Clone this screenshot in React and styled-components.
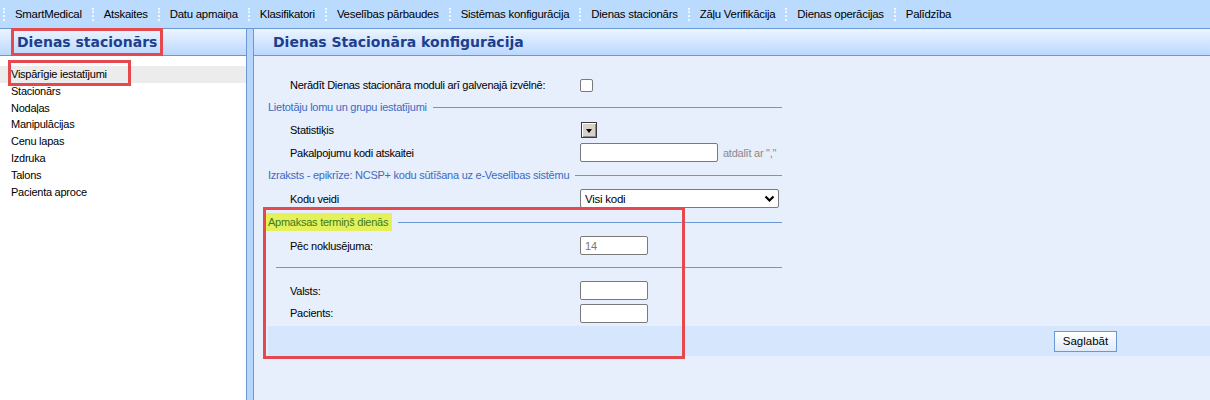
import React from 'react';
import styled, { createGlobalStyle } from 'styled-components';

const GlobalStyle = createGlobalStyle`
  body {
    margin: 0;
    font-family: "Liberation Sans", Arial, sans-serif;
    font-size: 11px;
    letter-spacing: -0.25px;
    color: #000;
    background: #e7eefc;
  }
`;

const Page = styled.div`
  display: flex;
  flex-direction: column;
  height: 400px;
  overflow: hidden;
`;

const MenuBar = styled.div`
  display: flex;
  align-items: center;
  height: 28px;
  background: #bbdbfe;
  border-bottom: 1px solid #6a98d4;
  padding-left: 3px;
`;

const MenuItem = styled.div`
  display: flex;
  align-items: center;
  font-size: 11.42px;
  margin-right: 10px;
`;

const MenuSep = styled.span`
  width: 0;
  height: 13px;
  border-left: 2px dotted #f2f8ff;
  margin-right: 10px;
`;

const Main = styled.div`
  flex: 1;
  display: flex;
  min-height: 0;
`;

const SidePanel = styled.div`
  width: 246px;
  background: #fff;
  display: flex;
  flex-direction: column;
`;

const Splitter = styled.div`
  width: 6px;
  background: #b8d6fc;
  border-left: 1px solid #6a98d4;
  border-right: 1px solid #6a98d4;
`;

const ContentPanel = styled.div`
  flex: 1;
  position: relative;
  background: #e7eefc;
`;

const PanelHeader = styled.div`
  height: 26px;
  display: flex;
  align-items: center;
  padding-left: ${({ $indent }) => $indent}px;
  background: linear-gradient(#ecf4ff, #bcd8fd);
  border-bottom: 1px solid #6a98d4;
`;

const Title = styled.span`
  font-family: "DejaVu Sans", Verdana, sans-serif;
  font-weight: bold;
  font-size: 14px;
  letter-spacing: 0;
  color: #1c3f8e;
`;

const Annotated = styled.span`
  outline: 3px solid #e5484d;
  outline-offset: ${({ $offset }) => $offset || '2px'};
`;

const NavList = styled.ul`
  list-style: none;
  margin: 0;
  padding: 10px 0 0;
`;

const NavItem = styled.li`
  height: 16.8px;
  line-height: 16.8px;
  padding-left: 11px;
  background: ${({ $active }) => ($active ? '#ececec' : 'transparent')};
`;

const NavBox = styled.span`
  position: relative;
  &::after {
    content: '';
    position: absolute;
    left: -3px;
    top: -8px;
    width: 117px;
    height: 20px;
    border: 3px solid #e5484d;
  }
`;

const Form = styled.div`
  margin: 18px 0 0 14px;
  width: 514px;
`;

const Row = styled.div`
  display: flex;
  align-items: center;
  height: ${({ $h }) => $h}px;
`;

const Label = styled.div`
  width: 290px;
  padding-left: 22px;
  flex-shrink: 0;
`;

const Legend = styled.div`
  display: flex;
  align-items: center;
  height: ${({ $h }) => $h}px;
  color: ${({ $green }) => ($green ? '#3d7a1c' : '#3b6cc1')};

  &::after {
    content: '';
    flex: 1;
    height: 1px;
    background: #6a98d4;
    margin-left: 6px;
  }
`;

const LegendText = styled.span`
  padding: ${({ $mark }) => ($mark ? '3px 4px 3px 2px' : '0')};
  margin-left: ${({ $mark }) => ($mark ? '-2px' : '0')};
  background: ${({ $mark }) => ($mark ? '#e4f15a' : 'transparent')};
`;

const Rule = styled.div`
  height: 1px;
  background: #6a98d4;
  margin: 10px 0 11px 8px;
`;

const Checkbox = styled.span`
  width: 11px;
  height: 11px;
  background: #fff;
  border: 1px solid #7a7a7a;
  border-radius: 2px;
`;

const DropButton = styled.span`
  width: 14px;
  height: 14px;
  margin-left: 1px;
  display: flex;
  align-items: center;
  justify-content: center;
  background: #d6d2ca;
  border: 1px solid #3c3c3c;
  box-shadow: inset 1px 1px 0 #fff, inset -1px -1px 0 #8a8a8a;

  &::before {
    content: '';
    border-left: 3px solid transparent;
    border-right: 3px solid transparent;
    border-top: 4px solid #000;
    margin-top: 1px;
  }
`;

const TextInput = styled.input`
  box-sizing: border-box;
  width: ${({ $w }) => $w}px;
  height: 19px;
  border: 1px solid #7a7a7a;
  border-radius: 2px;
  background: #fff;
  padding: 0 4px;
  font: inherit;
  color: #777;
  outline: none;
`;

const Hint = styled.span`
  margin-left: 5px;
  color: #8a8a8a;
`;

const Select = styled.div`
  box-sizing: border-box;
  width: 199px;
  height: 19px;
  display: flex;
  align-items: center;
  justify-content: space-between;
  padding: 0 3px 0 4px;
  background: #fff;
  border: 1px solid #7a7a7a;
  border-radius: 2px;
  font-size: 11.5px;
`;

const Footer = styled.div`
  margin: 2px 0 0 14px;
  height: 30px;
  display: flex;
  align-items: center;
  justify-content: flex-end;
  padding-right: 93px;
  background: #d6e6fc;
`;

const SaveButton = styled.button`
  width: 63px;
  height: 21px;
  border: 1px solid #6a98d4;
  background: linear-gradient(#ffffff, #dfeafa);
  font: inherit;
  font-size: 11.5px;
  color: #000;
  padding: 0;
`;

const FocusBox = styled.div`
  position: absolute;
  left: 9px;
  top: 178px;
  width: 416px;
  height: 146px;
  border: 3px solid #e5484d;
  pointer-events: none;
`;

const menu = [
  'SmartMedical',
  'Atskaites',
  'Datu apmaiņa',
  'Klasifikatori',
  'Veselības pārbaudes',
  'Sistēmas konfigurācija',
  'Dienas stacionārs',
  'Zāļu Verifikācija',
  'Dienas operācijas',
  'Palīdzība',
];

const navItems = [
  'Stacionārs',
  'Nodaļas',
  'Manipulācijas',
  'Cenu lapas',
  'Izdruka',
  'Talons',
  'Pacienta aproce',
];

const Chevron = () => (
  <svg width="11" height="8" viewBox="0 0 11 8">
    <path d="M1.5 1.5 L5.5 5.5 L9.5 1.5" fill="none" stroke="#000" strokeWidth="2.2" />
  </svg>
);

const App = () => (
  <>
    <GlobalStyle />
    <Page>
      <MenuBar>
        {menu.map((item) => (
          <MenuItem key={item}>
            <MenuSep />
            {item}
          </MenuItem>
        ))}
      </MenuBar>
      <Main>
        <SidePanel>
          <PanelHeader $indent={17}>
            <Annotated $offset="3px">
              <Title>Dienas stacionārs</Title>
            </Annotated>
          </PanelHeader>
          <NavList>
            <NavItem $active>
              <NavBox>Vispārīgie iestatījumi</NavBox>
            </NavItem>
            {navItems.map((item) => (
              <NavItem key={item}>{item}</NavItem>
            ))}
          </NavList>
        </SidePanel>
        <Splitter />
        <ContentPanel>
          <PanelHeader $indent={19}>
            <Title>Dienas Stacionāra konfigurācija</Title>
          </PanelHeader>
          <Form>
            <Row $h={22}>
              <Label>Nerādīt Dienas stacionāra moduli arī galvenajā izvēlnē:</Label>
              <Checkbox />
            </Row>
            <Legend $h={22}>
              <LegendText>Lietotāju lomu un grupu iestatījumi</LegendText>
            </Legend>
            <Row $h={24}>
              <Label>Statistiķis</Label>
              <DropButton />
            </Row>
            <Row $h={21}>
              <Label>Pakalpojumu kodi atskaitei</Label>
              <TextInput $w={138} readOnly />
              <Hint>atdalīt ar ","</Hint>
            </Row>
            <Legend $h={24}>
              <LegendText>Izraksts - epikrīze: NCSP+ kodu sūtīšana uz e-Veselības sistēmu</LegendText>
            </Legend>
            <Row $h={23}>
              <Label>Kodu veidi</Label>
              <Select>
                Visi kodi
                <Chevron />
              </Select>
            </Row>
            <Legend $h={24} $green>
              <LegendText $mark>Apmaksas termiņš dienās</LegendText>
            </Legend>
            <Row $h={23}>
              <Label>Pēc noklusējuma:</Label>
              <TextInput $w={68} readOnly value="14" />
            </Row>
            <Rule />
            <Row $h={23}>
              <Label>Valsts:</Label>
              <TextInput $w={68} readOnly />
            </Row>
            <Row $h={22}>
              <Label>Pacients:</Label>
              <TextInput $w={68} readOnly />
            </Row>
          </Form>
          <Footer>
            <SaveButton>Saglabāt</SaveButton>
          </Footer>
          <FocusBox />
        </ContentPanel>
      </Main>
    </Page>
  </>
);

export default App;
